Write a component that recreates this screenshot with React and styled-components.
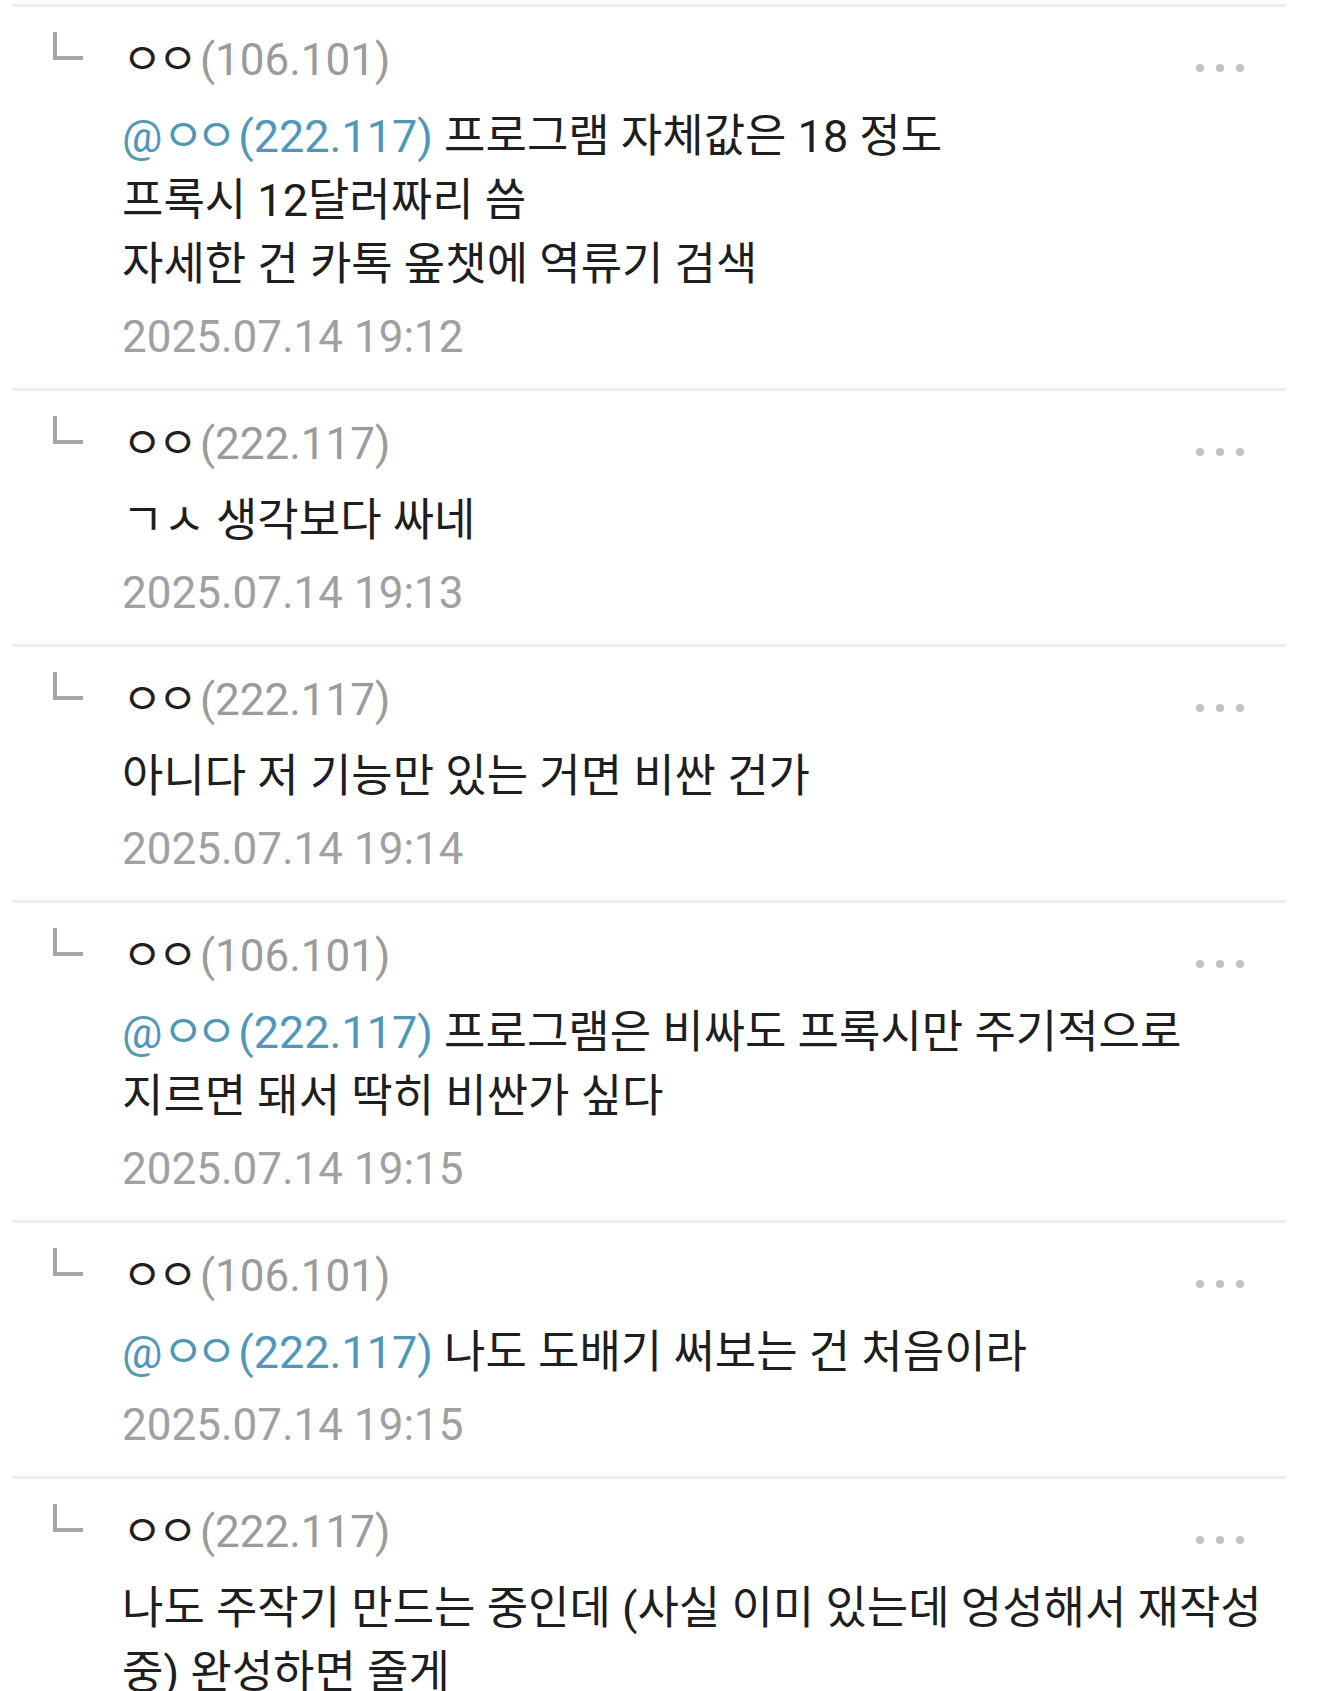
import React from "react";
import styled, { createGlobalStyle } from "styled-components";

const GlobalStyle = createGlobalStyle`
  html, body {
    margin: 0;
    padding: 0;
    background: #ffffff;
  }
  body {
    font-family: Roboto, "Noto Sans CJK KR", "Noto Sans", sans-serif;
    -webkit-font-smoothing: antialiased;
  }
`;

const Page = styled.main`
  padding-top: 4px;
  width: 1340px;
`;

const List = styled.ul`
  margin: 0 0 0 12px;
  padding: 0;
  width: 1274px;
  list-style: none;
  border-top: 3px solid #efefef;
`;

const Item = styled.li`
  display: grid;
  grid-template-columns: 110px 1fr;
  padding: 22px 19px 23px 0;
  border-bottom: 3px solid #efefef;
`;

const ReplyMark = styled.span`
  display: block;
  box-sizing: border-box;
  width: 30px;
  height: 28px;
  margin: 3px 0 0 41px;
  border-left: 4px solid #a6a6a6;
  border-bottom: 4px solid #a6a6a6;
`;

const Content = styled.div`
  display: flex;
  flex-direction: column;
  min-width: 0;
`;

const Header = styled.div`
  display: flex;
  align-items: center;
  justify-content: space-between;
  height: 56px;
  margin-top: 3px;
`;

const Author = styled.span`
  font-size: 44px;
  line-height: 56px;
  white-space: nowrap;
  color: #1f1f1f;
`;

/* anonymous nickname: jamo packed closer than their full-width advance */
const Jamo = styled.span`
  letter-spacing: ${(p) => p.$tight}px;
  margin-right: ${(p) => p.$after}px;
`;

const Ip = styled.span`
  color: #9b9b9b;
`;

const More = styled.svg`
  width: 48px;
  height: 10px;
  margin: 15px 23px 0 0;
  flex: none;
`;

const Body = styled.p`
  margin: 17px 0 0;
  font-size: 45px;
  line-height: 64px;
  color: #1e1e1e;
  white-space: pre-line;
  word-break: keep-all;
  overflow-wrap: break-word;
`;

const Mention = styled.span`
  color: #4f98b8;
`;

const Stamp = styled.time`
  display: block;
  margin-top: 12px;
  font-size: 44px;
  line-height: 56px;
  color: #a0a0a0;
`;

const comments = [
  {
    ip: "106.101",
    mention: "222.117",
    text: "프로그램 자체값은 18 정도\n프록시 12달러짜리 씀\n자세한 건 카톡 옾챗에 역류기 검색",
    date: "2025.07.14 19:12",
  },
  { ip: "222.117", text: "ㄱㅅ 생각보다 싸네", date: "2025.07.14 19:13" },
  { ip: "222.117", text: "아니다 저 기능만 있는 거면 비싼 건가", date: "2025.07.14 19:14" },
  {
    ip: "106.101",
    mention: "222.117",
    text: "프로그램은 비싸도 프록시만 주기적으로 지르면 돼서 딱히 비싼가 싶다",
    date: "2025.07.14 19:15",
  },
  {
    ip: "106.101",
    mention: "222.117",
    text: "나도 도배기 써보는 건 처음이라",
    date: "2025.07.14 19:15",
  },
  {
    ip: "222.117",
    text: "나도 주작기 만드는 중인데 (사실 이미 있는데 엉성해서 재작성 중) 완성하면 줄게",
    date: "2025.07.14 19:16",
  },
];

function MoreIcon() {
  return (
    <More viewBox="0 0 48 10" aria-label="더보기">
      <circle cx="4" cy="5" r="4" fill="#c2c2c2" />
      <circle cx="24" cy="5" r="4" fill="#c2c2c2" />
      <circle cx="44" cy="5" r="4" fill="#c2c2c2" />
    </More>
  );
}

function Comment({ ip, mention, text, date }) {
  return (
    <Item>
      <ReplyMark />
      <Content>
        <Header>
          <Author>
            <Jamo $tight={-5} $after={7}>ㅇㅇ</Jamo>
            <Ip>({ip})</Ip>
          </Author>
          <MoreIcon />
        </Header>
        <Body>
          {mention && (
            <Mention>
              @<Jamo $tight={-8} $after={9}>ㅇㅇ</Jamo>({mention})
            </Mention>
          )}
          {mention ? " " : ""}
          {text}
        </Body>
        <Stamp>{date}</Stamp>
      </Content>
    </Item>
  );
}

export default function App() {
  return (
    <>
      <GlobalStyle />
      <Page>
        <List>
          {comments.map((c, i) => (
            <Comment key={i} {...c} />
          ))}
        </List>
      </Page>
    </>
  );
}
